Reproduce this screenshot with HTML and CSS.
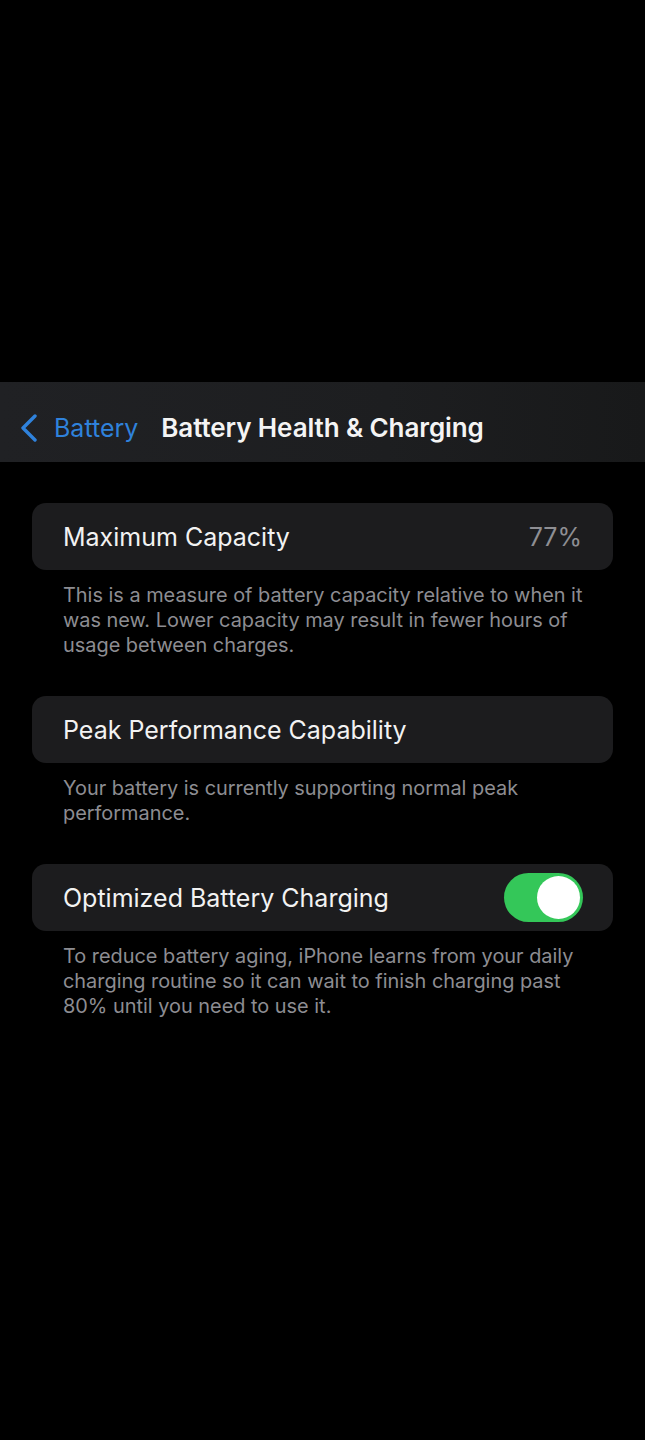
FILE: index.html
```
<!DOCTYPE html>
<html>
<head>
<meta charset="utf-8">
<link rel="stylesheet" href="styles.css">
</head>
<body>
<div class="screen">
  <div class="top-space"></div>
  <header class="navbar">
    <div class="back">
      <svg class="chevron" width="20" height="28" viewBox="0 0 20 28"><path d="M16 2 L4 14 L16 26" fill="none" stroke="#2f82dc" stroke-width="3.4" stroke-linecap="round" stroke-linejoin="round"/></svg>
      <span class="back-label">Battery</span>
    </div>
    <h1 class="title">Battery Health &amp; Charging</h1>
  </header>
  <main class="content">
    <section class="group">
      <div class="card">
        <span class="label">Maximum Capacity</span>
        <span class="value">77%</span>
      </div>
      <p class="footer">This is a measure of battery capacity relative to when it was new. Lower capacity may result in fewer hours of usage between charges.</p>
    </section>
    <section class="group">
      <div class="card">
        <span class="label">Peak Performance Capability</span>
      </div>
      <p class="footer">Your battery is currently supporting normal peak performance.</p>
    </section>
    <section class="group">
      <div class="card">
        <span class="label">Optimized Battery Charging</span>
        <span class="toggle"><span class="knob"></span></span>
      </div>
      <p class="footer">To reduce battery aging, iPhone learns from your daily charging routine so it can wait to finish charging past 80% until you need to use it.</p>
    </section>
  </main>
</div>
</body>
</html>
```
FILE: styles.css
```
html, body {
  margin: 0;
  padding: 0;
  background: #000;
}
.screen {
  width: 645px;
  height: 1440px;
  background: #000;
  font-family: Inter, "Noto Sans", "Liberation Sans", sans-serif;
  color: #fff;
  overflow: hidden;
}
.top-space {
  height: 382px;
}
.navbar {
  height: 80px;
  display: flex;
  align-items: center;
  background: linear-gradient(90deg, #202124 0%, #1d1e20 60%, #18191a 100%);
  box-sizing: border-box;
  padding-left: 19px;
  padding-top: 11px;
}
.back {
  display: flex;
  align-items: center;
}
.chevron {
  display: block;
  margin-right: 15px;
  margin-top: 1px;
}
.back-label {
  color: #2f82dc;
  font-size: 25px;
}
.title {
  margin: 0 0 0 23px;
  font-size: 26px;
  font-weight: 600;
  letter-spacing: -0.1px;
  color: #f4f4f4;
}
.content {
  padding: 41px 32px 0 32px;
}
.group {
  margin-bottom: 38px;
}
.card {
  height: 67px;
  border-radius: 14px;
  background: #1c1c1e;
  display: flex;
  align-items: center;
  justify-content: space-between;
  padding: 0 31px;
}
.label {
  font-size: 25px;
  color: #f2f2f2;
}
.value {
  font-size: 25px;
  color: #8e8e93;
}
.toggle {
  width: 79px;
  height: 49px;
  border-radius: 25px;
  background: #34c759;
  display: flex;
  align-items: center;
  justify-content: flex-end;
  padding-right: 3px;
  box-sizing: border-box;
  margin-right: -1px;
}
.knob {
  width: 43px;
  height: 43px;
  border-radius: 50%;
  background: #fff;
}
.footer {
  margin: 13px 0 0 0;
  padding: 0 22px 0 31px;
  font-size: 19.9px;
  line-height: 25px;
  color: #8d8d92;
}
```
